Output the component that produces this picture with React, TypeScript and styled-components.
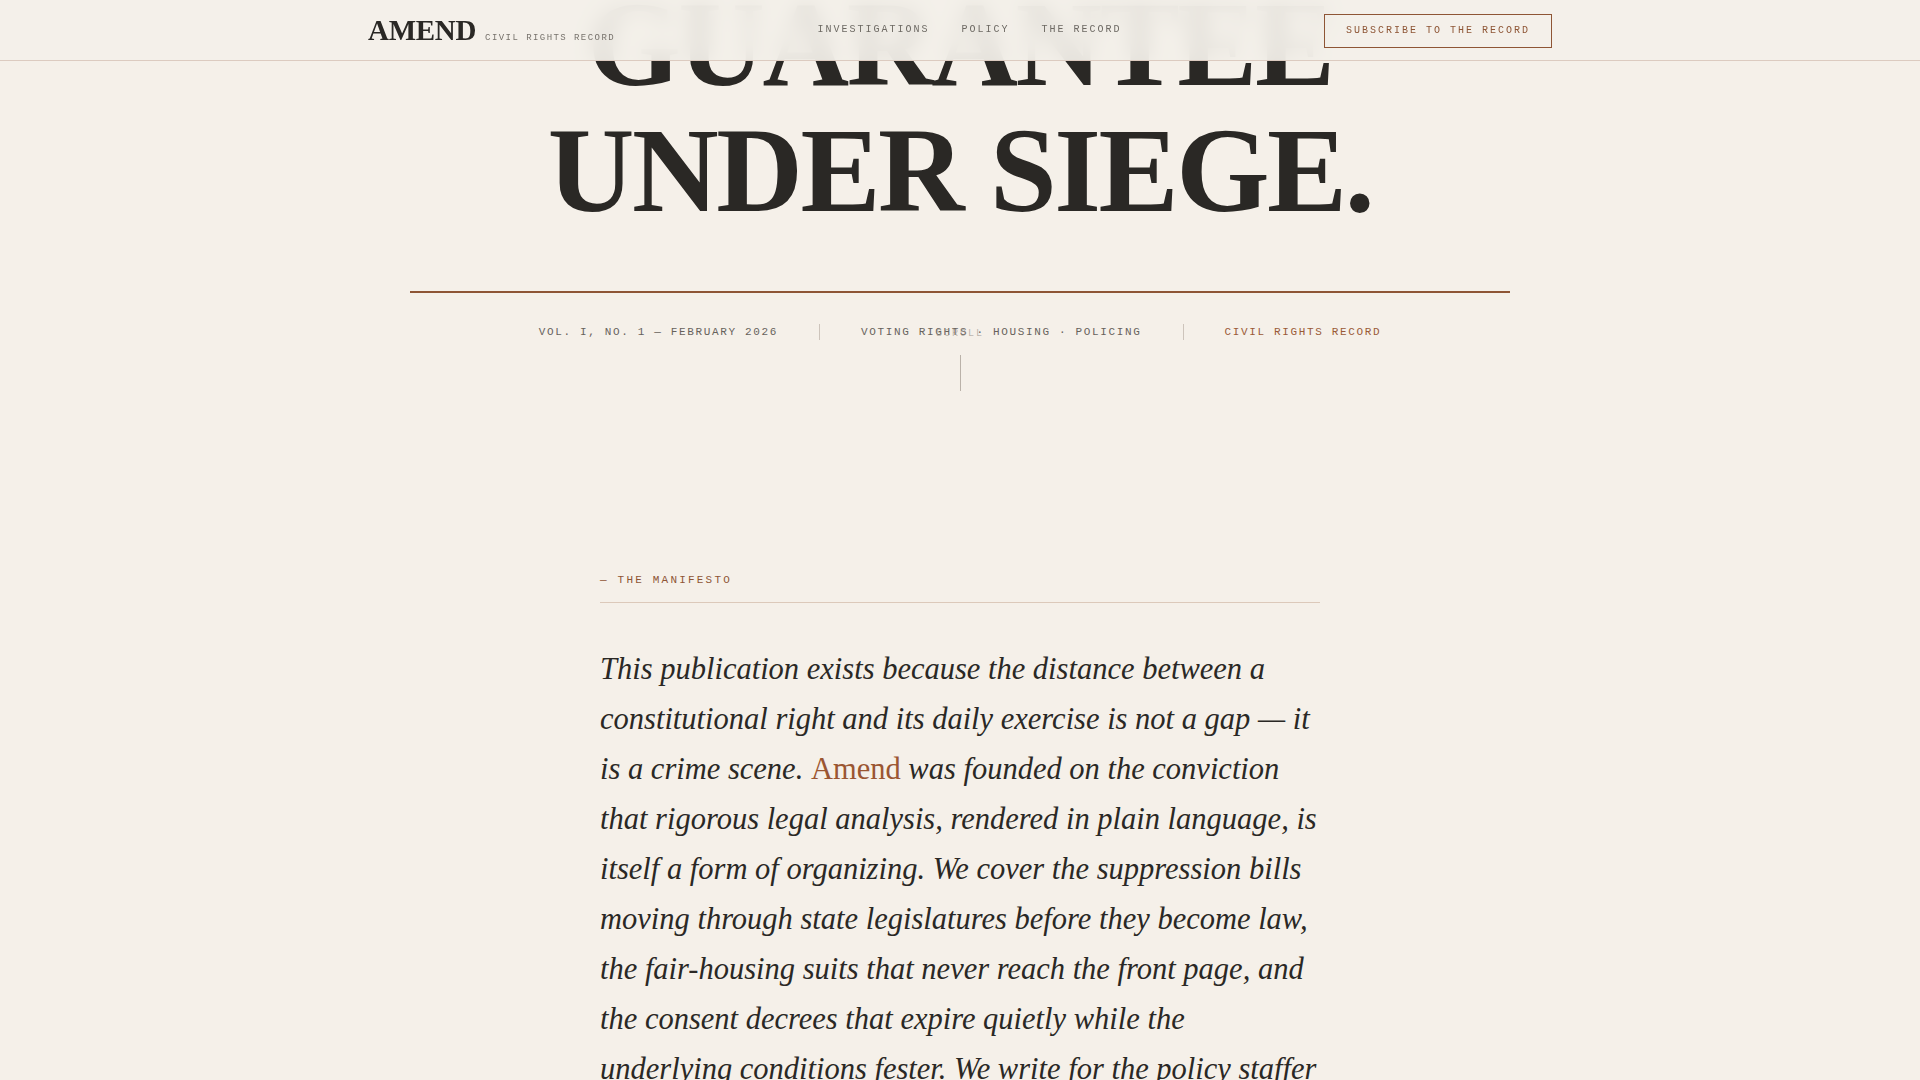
import { useLayoutEffect, useRef } from 'react'
import styled, { createGlobalStyle } from 'styled-components'

const ink = '#2a2825'
const copper = '#8e5535'
const paper = '#f5f0e9'
const serif = '"Liberation Serif", "Times New Roman", serif'
const mono = '"Liberation Mono", "Courier New", monospace'

const GlobalStyle = createGlobalStyle`
  html, body {
    margin: 0;
    padding: 0;
    background: ${paper};
    color: ${ink};
    scroll-behavior: auto;
  }
  * {
    box-sizing: border-box;
  }
`

const Masthead = styled.header`
  position: fixed;
  top: 0;
  left: 0;
  right: 0;
  z-index: 10;
  height: 61px;
  background: rgba(243, 240, 234, 0.93);
  backdrop-filter: blur(10px);
  border-bottom: 1px solid #dccbc0;
`

const MastheadInner = styled.div`
  max-width: 1280px;
  height: 60px;
  margin: 0 auto;
  padding: 0 48px;
  display: flex;
  align-items: center;
  justify-content: space-between;
`

const Brand = styled.a`
  display: flex;
  align-items: baseline;
  gap: 9px;
  text-decoration: none;
  color: ${ink};
`

const Wordmark = styled.span`
  font-family: ${serif};
  font-weight: 700;
  font-size: 29px;
  line-height: 1;
  letter-spacing: -0.01em;
`

const Tagline = styled.span`
  font-family: ${mono};
  font-size: 9px;
  letter-spacing: 0.16em;
  color: #77726c;
  text-transform: uppercase;
`

const Nav = styled.nav`
  display: flex;
  gap: 32px;
`

const NavLink = styled.a`
  font-family: ${mono};
  font-size: 10px;
  line-height: 1;
  letter-spacing: 0.2em;
  color: #6d6963;
  text-decoration: none;
  text-transform: uppercase;
`

const SubscribeButton = styled.button`
  margin-top: 2px;
  font-family: ${mono};
  font-size: 10px;
  line-height: 12px;
  letter-spacing: 0.2em;
  text-transform: uppercase;
  color: ${copper};
  background: transparent;
  border: 1px solid ${copper};
  padding: 10px 21px;
  cursor: pointer;
`

const Hero = styled.section`
  position: relative;
  padding: 220px 24px 84px;
`

const HeroInner = styled.div`
  max-width: 1100px;
  margin: 0 auto;
`

const Kicker = styled.p`
  margin: 0 0 40px;
  text-align: center;
  font-family: ${mono};
  font-size: 11px;
  letter-spacing: 0.2em;
  color: ${copper};
  text-transform: uppercase;
`

const Headline = styled.h1`
  margin: 0;
  text-align: center;
  font-family: ${serif};
  font-weight: 700;
  font-size: 120px;
  line-height: 126px;
  letter-spacing: -0.02em;
  color: ${ink};
`

const HeadlineLine = styled.span`
  display: block;
`

const Rule = styled.hr`
  margin: 57px 0 0;
  height: 2px;
  border: 0;
  background: ${copper};
`

const MetaRow = styled.div`
  margin-top: 31px;
  display: flex;
  align-items: center;
  justify-content: center;
  gap: 41px;
`

const MetaItem = styled.span<{ $accent?: boolean }>`
  font-family: ${mono};
  font-size: 11px;
  line-height: 16px;
  letter-spacing: 0.15em;
  text-transform: uppercase;
  color: ${(p) => (p.$accent ? '#9a5a37' : '#67625c')};
`

const MetaDivider = styled.span`
  width: 1px;
  height: 16px;
  background: #cdc4bb;
`

const ScrollCue = styled.div`
  position: absolute;
  left: 50%;
  bottom: 33px;
  transform: translateX(-50%);
  display: flex;
  flex-direction: column;
  align-items: center;
  gap: 15px;
`

const ScrollLabel = styled.span`
  font-family: ${mono};
  font-size: 10px;
  line-height: 12px;
  letter-spacing: 0.2em;
  color: rgba(150, 142, 133, 0.62);
`

const ScrollLine = styled.span`
  width: 1px;
  height: 36px;
  background: #bab2a9;
`

const Manifesto = styled.section`
  padding: 148px 24px 180px;
`

const Column = styled.div`
  max-width: 720px;
  margin: 0 auto;
`

const SectionLabel = styled.div`
  font-family: ${mono};
  font-size: 11px;
  line-height: 16px;
  letter-spacing: 0.2em;
  text-transform: uppercase;
  color: ${copper};
  padding-bottom: 14px;
  border-bottom: 1px solid #dcc9ba;
`

const Lede = styled.p`
  margin: 41px 0 0;
  font-family: ${serif};
  font-style: italic;
  font-size: 30.5px;
  line-height: 50px;
  color: ${ink};
`

const Name = styled.span`
  font-style: normal;
  color: #9b5632;
`

const Signoff = styled.p`
  margin: 48px 0 0;
  font-family: ${mono};
  font-size: 11px;
  letter-spacing: 0.2em;
  text-transform: uppercase;
  color: #67625c;
`

export default function App() {
  const closingLine = useRef<HTMLSpanElement>(null)

  // open the page with the masthead resting on the headline's last lines
  useLayoutEffect(() => {
    const el = closingLine.current
    if (!el) return
    const top = el.getBoundingClientRect().top + window.scrollY
    window.scrollTo(0, Math.round(top - 108))
  }, [])

  return (
    <>
      <GlobalStyle />
      <Masthead>
        <MastheadInner>
          <Brand href='#'>
            <Wordmark>AMEND</Wordmark>
            <Tagline>Civil Rights Record</Tagline>
          </Brand>
          <Nav>
            <NavLink href='#'>Investigations</NavLink>
            <NavLink href='#'>Policy</NavLink>
            <NavLink href='#'>The Record</NavLink>
          </Nav>
          <SubscribeButton>Subscribe to the Record</SubscribeButton>
        </MastheadInner>
      </Masthead>

      <Hero>
        <HeroInner>
          <Kicker>— Issue One · The Fourteenth Amendment</Kicker>
          <Headline>
            <HeadlineLine>THE EQUAL</HeadlineLine>
            <HeadlineLine>PROTECTION</HeadlineLine>
            <HeadlineLine>GUARANTEE</HeadlineLine>
            <HeadlineLine ref={closingLine}>UNDER SIEGE.</HeadlineLine>
          </Headline>
          <Rule />
          <MetaRow>
            <MetaItem>Vol. I, No. 1 — February 2026</MetaItem>
            <MetaDivider />
            <MetaItem>Voting Rights · Housing · Policing</MetaItem>
            <MetaDivider />
            <MetaItem $accent>Civil Rights Record</MetaItem>
          </MetaRow>
        </HeroInner>
        <ScrollCue>
          <ScrollLabel>SCROLL</ScrollLabel>
          <ScrollLine />
        </ScrollCue>
      </Hero>

      <Manifesto>
        <Column>
          <SectionLabel>— The Manifesto</SectionLabel>
          <Lede>
            This publication exists because the distance between a constitutional right and its daily exercise is not a
            gap — it is a crime scene. <Name>Amend</Name> was founded on the conviction that rigorous legal analysis,
            rendered in plain language, is itself a form of organizing. We cover the suppression bills moving through
            state legislatures before they become law, the fair-housing suits that never reach the front page, and the
            consent decrees that expire quietly while the underlying conditions fester. We write for the policy staffer
            drafting testimony at midnight, the tenant organizer reading a lease at a kitchen table, and the public
            defender who needs the case law before the arraignment.
          </Lede>
          <Signoff>— The Editors</Signoff>
        </Column>
      </Manifesto>
    </>
  )
}
